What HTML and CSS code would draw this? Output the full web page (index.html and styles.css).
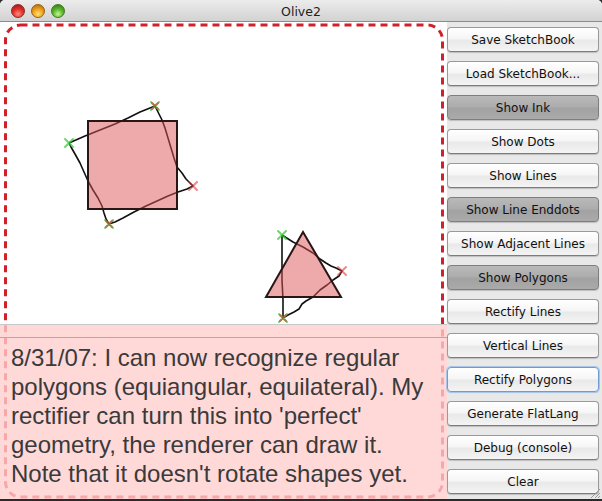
FILE: index.html
```html
<!DOCTYPE html>
<html>
<head>
<meta charset="utf-8">
<title>Olive2</title>
<link rel="stylesheet" href="styles.css">
</head>
<body>
<div class="window">
  <div class="titlebar">
    <div class="lights">
      <span class="light red"></span>
      <span class="light yellow"></span>
      <span class="light green"></span>
    </div>
    <div class="title">Olive2</div>
  </div>
  <div class="content">
    <div class="canvas">
      <svg class="drawing" width="447" height="479" viewBox="0 22 447 479">
        <rect x="5.5" y="25" width="437" height="472" rx="15" ry="15" fill="none" stroke="#d0202a" stroke-width="3" stroke-dasharray="7 5"/>
        <!-- hand drawn quad -->
        <polyline fill="none" stroke="#111" stroke-width="1.6" stroke-linejoin="round"
          points="69,143 85,136 100,130 115,124 128,118 140,112 150,108 155,106 158,112 162,120 165,128 168,138 171,148 174,158 177,167 182,173 186,179 190,183 193,186 187,189 178,192 168,196 157,201 146,206 134,212 123,218 115,222 109,224 106,219 104,213 102,206 98,198 93,190 88,181 84,172 80,163 75,154 71,147 69,143"/>
        <rect x="88" y="121" width="89" height="88" fill="rgba(221,85,85,0.5)" stroke="#2a1515" stroke-width="2"/>
        <!-- hand drawn triangle -->
        <polyline fill="none" stroke="#111" stroke-width="1.6" stroke-linejoin="round"
          points="282,235 293,242 303,247 313,253 320,259 326,263 331,266 336,268 342,271 339,276 333,280 327,285 320,290 313,297 306,301 302,304 299,309 294,312 288,315 283,318 283,300 282,280 282,260 282,245 282,235"/>
        <polygon points="303,232 266,297 341,297" fill="rgba(221,85,85,0.5)" stroke="#2a1515" stroke-width="2"/>
        <!-- crosses -->
        <g stroke-width="2" stroke-linecap="round">
          <g stroke="rgba(60,200,60,0.75)">
            <path d="M65,139 L73,147 M73,139 L65,147"/>
            <path d="M151,102 L159,110 M159,102 L151,110"/>
            <path d="M105,220 L113,228 M113,220 L105,228"/>
            <path d="M278,231 L286,239 M286,231 L278,239"/>
            <path d="M279,314 L287,322 M287,314 L279,322"/>
          </g>
          <g stroke="rgba(220,60,60,0.6)">
            <path d="M152,103 L158,109 M158,103 L152,109"/>
            <path d="M189,182 L197,190 M197,182 L189,190"/>
            <path d="M106,221 L112,227 M112,221 L106,227"/>
            <path d="M338,267 L346,275 M346,267 L338,275"/>
            <path d="M280,315 L286,321 M286,315 L280,321"/>
          </g>
        </g>
      </svg>
      <div class="note">
        <div class="note-head"></div>
        <p class="note-text"><span class="ln">8/31/07: I can now recognize regular</span><span class="ln">polygons (equiangular, equilateral). My</span><span class="ln">rectifier can turn this into 'perfect'</span><span class="ln">geometry, the renderer can draw it.</span><span class="ln">Note that it doesn't rotate shapes yet.</span></p>
      </div>
    </div>
    <div class="sidebar">
      <button class="btn">Save SketchBook</button>
      <button class="btn">Load SketchBook...</button>
      <button class="btn on">Show Ink</button>
      <button class="btn">Show Dots</button>
      <button class="btn">Show Lines</button>
      <button class="btn on">Show Line Enddots</button>
      <button class="btn">Show Adjacent Lines</button>
      <button class="btn on">Show Polygons</button>
      <button class="btn">Rectify Lines</button>
      <button class="btn">Vertical Lines</button>
      <button class="btn focus">Rectify Polygons</button>
      <button class="btn">Generate FlatLang</button>
      <button class="btn">Debug (console)</button>
      <button class="btn">Clear</button>
      <svg class="grip" width="11" height="11" viewBox="0 0 11 11">
        <path d="M10,1 L1,10 M10,5 L5,10 M10,8 L8,10" stroke="#999" stroke-width="1"/>
      </svg>
    </div>
  </div>
</div>
</body>
</html>
```
FILE: styles.css
```css
html, body {
  margin: 0;
  padding: 0;
}
body {
  background: #2a2a2a;
  width: 602px;
  height: 501px;
  overflow: hidden;
}
.window {
  width: 602px;
  height: 499px;
  display: flex;
  flex-direction: column;
  background: #e8e8e8;
  border-radius: 5px 5px 0 0;
  overflow: hidden;
}
.titlebar {
  height: 21px;
  flex: none;
  border-bottom: 1px solid #8c8c8c;
  background: linear-gradient(#ececec, #d2d2d2);
  position: relative;
  display: flex;
  align-items: center;
  justify-content: center;
}
.lights {
  position: absolute;
  left: 11px;
  top: 4px;
  display: flex;
  gap: 6px;
}
.light {
  width: 14px;
  height: 14px;
  border-radius: 50%;
  box-sizing: border-box;
  display: block;
}
.light.red {
  background: radial-gradient(circle at 50% 75%, #ff8a80 0%, #e0342c 45%, #9a1410 100%);
  border: 1px solid #8a2a22;
}
.light.yellow {
  background: radial-gradient(circle at 50% 75%, #ffe07a 0%, #f0a21e 45%, #a86204 100%);
  border: 1px solid #946018;
}
.light.green {
  background: radial-gradient(circle at 50% 75%, #c8f59a 0%, #5cb82a 45%, #2d7010 100%);
  border: 1px solid #3e7a22;
}
.title {
  font-family: "DejaVu Sans", sans-serif;
  font-size: 12.5px;
  color: #1e1e1e;
  padding-top: 1px;
}
.content {
  flex: 1;
  display: flex;
  min-height: 0;
}
.canvas {
  width: 447px;
  flex: none;
  background: #ffffff;
  position: relative;
  overflow: hidden;
}
.drawing {
  display: block;
}
.note {
  position: absolute;
  left: 0;
  top: 302px;
  width: 448px;
  bottom: 0;
  background: rgba(255, 205, 205, 0.78);
  border-top: 1px solid #c9c9c9;
}
.note-head {
  height: 12px;
  border-bottom: 1px solid #ec8f8f;
}
.note-text {
  margin: 0;
  padding: 5px 0 0 11px;
  font-family: "Liberation Sans", Arial, sans-serif;
  font-size: 24px;
  line-height: 29px;
  color: #3a3a3a;
}
.ln {
  display: block;
  white-space: nowrap;
}
.sidebar {
  flex: 1;
  display: flex;
  flex-direction: column;
  gap: 9px;
  padding: 5px 3px 0 0;
  position: relative;
}
.btn {
  height: 25px;
  width: 152px;
  margin: 0;
  padding: 0;
  box-sizing: border-box;
  border: 1px solid #9a9a9a;
  border-bottom-color: #7c7c7c;
  border-radius: 4px;
  background: linear-gradient(#ffffff 0%, #f6f6f6 45%, #e9e9e9 55%, #f4f4f4 100%);
  box-shadow: 0 1px 1px rgba(0,0,0,0.18);
  font-family: "DejaVu Sans", sans-serif;
  font-size: 12px;
  color: #111;
  text-align: center;
}
.btn.on {
  background: linear-gradient(#b9b9b9 0%, #adadad 45%, #a2a2a2 55%, #aaaaaa 100%);
  border-color: #7e7e7e;
}
.btn.focus {
  border-color: #6f9bd0;
  box-shadow: 0 0 0 1px #a9c5e8, 0 1px 1px rgba(0,0,0,0.15);
}
.grip {
  position: absolute;
  right: 1px;
  bottom: 0;
}
```
